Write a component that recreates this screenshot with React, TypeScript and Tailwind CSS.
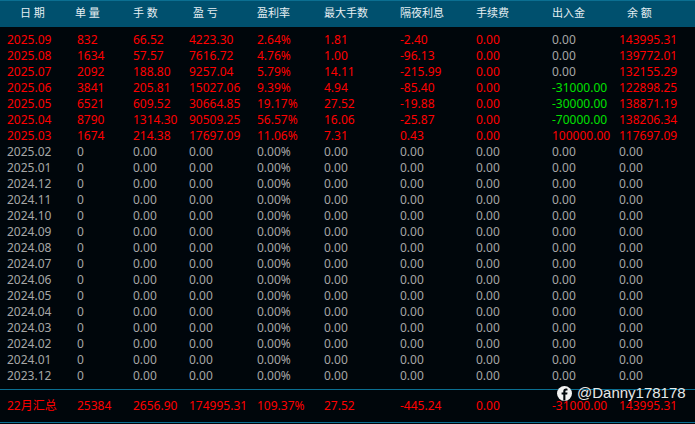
const rows: string[][] = [
  ["2025.09", "832", "66.52", "4223.30", "2.64%", "1.81", "-2.40", "0.00", "0.00", "143995.31"],
  ["2025.08", "1634", "57.57", "7616.72", "4.76%", "1.00", "-96.13", "0.00", "0.00", "139772.01"],
  ["2025.07", "2092", "188.80", "9257.04", "5.79%", "14.11", "-215.99", "0.00", "0.00", "132155.29"],
  ["2025.06", "3841", "205.81", "15027.06", "9.39%", "4.94", "-85.40", "0.00", "-31000.00", "122898.25"],
  ["2025.05", "6521", "609.52", "30664.85", "19.17%", "27.52", "-19.88", "0.00", "-30000.00", "138871.19"],
  ["2025.04", "8790", "1314.30", "90509.25", "56.57%", "16.06", "-25.87", "0.00", "-70000.00", "138206.34"],
  ["2025.03", "1674", "214.38", "17697.09", "11.06%", "7.31", "0.43", "0.00", "100000.00", "117697.09"],
];

const emptyMonths = [
  "2025.02", "2025.01", "2024.12", "2024.11", "2024.10", "2024.09", "2024.08", "2024.07",
  "2024.06", "2024.05", "2024.04", "2024.03", "2024.02", "2024.01", "2023.12",
];

const headers = ["日 期", "单 量", "手 数", "盈 亏", "盈利率", "最大手数", "隔夜利息", "手续费", "出入金", "余 额"];
const totals = ["22月汇总", "25384", "2656.90", "174995.31", "109.37%", "27.52", "-445.24", "0.00", "-31000.00", "143995.31"];

// column template shared by header, rows and total
const cols = "grid grid-cols-[70px_56px_56px_68px_67px_76px_76px_76px_67px_76px]";

// flow cell colour for the 出入金 column
const flowColor = (v: string) => {
  if (v.startsWith("-")) return "text-[#00e000]";
  if (v === "0.00") return "text-[#a6a6a6]";
  return "text-[#ff0000]";
};

const App = () => {
  return (
    <div className="relative flex h-[424px] w-[695px] flex-col overflow-hidden bg-[#00060b] font-['Noto_Sans','Noto_Sans_CJK_SC',sans-serif] text-[12px] leading-[16px]">
      {/* Header */}
      <div className={`${cols} h-[27px] items-center border-t border-[#0b6f92] bg-[#00506e] pb-[2px] pl-[7px] text-[11px] text-[#e6eef2]`}>
        {headers.map((h, i) => (
          <div key={h} className={i === 9 ? "pl-[8px]" : i === 0 ? "pl-[13px]" : i === 1 ? "-ml-[2px]" : i === 3 ? "pl-[4px]" : ""}>
            {h}
          </div>
        ))}
      </div>

      {/* Monthly rows */}
      <div className="flex flex-col pt-[5px]">
        {rows.map((r) => (
          <div key={r[0]} className={`${cols} h-4 pl-[7px] text-[#ff0000]`}>
            {r.map((v, i) => (
              <div key={i} className={i === 8 ? flowColor(v) : ""}>
                {v}
              </div>
            ))}
          </div>
        ))}
        {emptyMonths.map((m) => (
          <div key={m} className={`${cols} h-4 pl-[7px] text-[#a6a6a6]`}>
            <div>{m}</div>
            <div>0</div>
            <div>0.00</div>
            <div>0.00</div>
            <div>0.00%</div>
            <div>0.00</div>
            <div>0.00</div>
            <div>0.00</div>
            <div>0.00</div>
            <div>0.00</div>
          </div>
        ))}
      </div>

      {/* Totals */}
      <div className={`${cols} mt-[5px] h-[34px] items-center border-y border-[#0b6f92] pl-[7px] text-[#ff0000]`}>
        {totals.map((v) => (
          <div key={v}>{v}</div>
        ))}
      </div>

      {/* Watermark */}
      <div className="absolute left-[557px] top-[385px] flex items-center gap-[5px] font-['Liberation_Sans',sans-serif] text-[15px] text-[#e8e8e8]">
        <svg width="15" height="15" viewBox="0 0 15 15">
          <circle cx="7.5" cy="7.5" r="7.5" fill="#f2f2f2" />
          <path d="M8.4 14.5V8.6h1.8l.3-2H8.4V5.4c0-.6.3-1 1-1h1.1V2.7c-.5-.1-1-.1-1.500-.1-1.700 0-2.700 1-2.700 2.700v1.300H4.600v2h1.700v5.900z" fill="#00060b" />
        </svg>
        <span>@Danny178178</span>
      </div>
    </div>
  );
};

export default App;
